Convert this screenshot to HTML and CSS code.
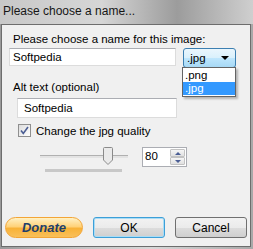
FILE: index.html
```html
<!DOCTYPE html>
<html lang="en">
<head>
    <meta charset="UTF-8">
    <title>Please choose a name...</title>
    <link rel="stylesheet" href="styles.css">
</head>
<body>

<div class="titlebar">Please choose a name...</div>

<div class="panel">
    <label class="label first">Please choose a name for this image:</label>
    <div class="name-row">
        <div class="textbox name">Softpedia</div>
        <div class="combo">
            <div class="combo-box">
                <span>.jpg</span>
                <span class="arrow"></span>
            </div>
            <ul class="combo-list">
                <li>.png</li>
                <li class="selected">.jpg</li>
            </ul>
        </div>
    </div>

    <label class="label alt">Alt text (optional)</label>
    <div class="textbox alt-box">Softpedia</div>

    <div class="check-row">
        <span class="checkbox">
            <svg width="9" height="9" viewBox="0 0 9 9"><path d="M1 4.5 L3.3 7.5 L8 1" fill="none" stroke="#4b5e94" stroke-width="1.6"/></svg>
        </span>
        <span>Change the jpg quality</span>
    </div>

    <div class="quality-row">
        <div class="slider">
            <div class="track"></div>
            <div class="thumb">
                <svg width="10" height="18" viewBox="0 0 10 18"><path d="M0.5 1.5 Q0.5 0.5 1.5 0.5 H8.5 Q9.5 0.5 9.5 1.5 V13 L5 17.5 L0.5 13 Z" fill="#eaeaea" stroke="#8a8a8a"/></svg>
            </div>
            <div class="range-bar"></div>
        </div>
        <div class="spin">
            <span class="spin-value">80</span>
            <div class="spin-buttons">
                <div class="spin-btn"><span class="up"></span></div>
                <div class="spin-btn"><span class="down"></span></div>
            </div>
        </div>
    </div>

    <div class="buttons">
        <button class="donate">Donate</button>
        <button class="btn ok">OK</button>
        <button class="btn">Cancel</button>
    </div>
</div>

</body>
</html>
```

FILE: styles.css
```css
body {
    margin: 0;
    width: 253px;
    height: 249px;
    overflow: hidden;
    font-family: "Liberation Sans", Arial, sans-serif;
    font-size: 11px;
    color: #000;
    background: linear-gradient(90deg, #9a9a9a 0%, #c4c4c4 30%, #d8d8d8 60%, #a8a8a8 100%);
}
.titlebar {
    height: 24px;
    box-sizing: border-box;
    padding: 4px 0 0 3px;
    font-size: 12px;
    color: #161616;
    background: linear-gradient(90deg, #c8c8c8 0%, #d6d6d6 40%, #9c9c9c 70%, #cfcfcf 100%);
}
.panel {
    margin-left: 1px;
    width: 250px;
    height: 223px;
    box-sizing: border-box;
    border: 1px solid #6d6d6d;
    background: #f0f0f0;
    display: flex;
    flex-direction: column;
}
.label {
    display: block;
    font-size: 11.5px;
    color: #000;
}
.label.first {
    margin: 8px 0 0 11px;
}
.name-row {
    display: flex;
    margin: 3px 0 0 7px;
    position: relative;
}
.textbox {
    box-sizing: border-box;
    height: 18px;
    border: 1px solid #dcdcdc;
    border-top-color: #abadb3;
    background: #fff;
    padding: 2px 0 0 3px;
    font-size: 11.5px;
}
.textbox.name {
    width: 167px;
}
.combo {
    margin-left: 7px;
    position: relative;
}
.combo-box {
    box-sizing: border-box;
    width: 53px;
    height: 20px;
    border: 1px solid #3c7fb1;
    border-radius: 3px;
    background: linear-gradient(#eaf6fd, #d9f0fc 50%, #bee6fd 51%, #a7d9f5);
    display: flex;
    align-items: center;
    justify-content: space-between;
    padding: 0 6px 0 3px;
    font-size: 11.5px;
}
.arrow {
    width: 0;
    height: 0;
    border-left: 4px solid transparent;
    border-right: 4px solid transparent;
    border-top: 4px solid #000;
}
.combo-list {
    position: absolute;
    top: 19px;
    left: -1px;
    width: 54px;
    margin: 0;
    padding: 1px 0;
    list-style: none;
    box-sizing: border-box;
    border: 1px solid #646464;
    background: #fff;
    box-shadow: 2px 2px 2px rgba(0, 0, 0, 0.25);
    font-size: 11.5px;
    z-index: 2;
}
.combo-list li {
    height: 13px;
    line-height: 13px;
    padding-left: 2px;
}
.combo-list li.selected {
    background: #3399ff;
    color: #fff;
}
.label.alt {
    margin: 13px 0 0 11px;
}
.alt-box {
    width: 160px;
    height: 20px;
    margin: 5px 0 0 15px;
    padding: 3px 0 0 6px;
}
.check-row {
    display: flex;
    align-items: center;
    margin: 6px 0 0 16px;
    font-size: 11.5px;
}
.checkbox {
    box-sizing: border-box;
    width: 13px;
    height: 13px;
    border: 1px solid #8f8f8f;
    background: linear-gradient(135deg, #dcdcdc, #fff);
    display: flex;
    align-items: center;
    justify-content: center;
    margin-right: 5px;
}
.quality-row {
    display: flex;
    margin: 10px 0 0 38px;
}
.slider {
    position: relative;
    width: 88px;
    height: 26px;
}
.track {
    position: absolute;
    top: 8px;
    left: 0;
    right: 0;
    height: 2px;
    background: #e3e3e3;
    border-top: 1px solid #b0b0b0;
}
.thumb {
    position: absolute;
    left: 63px;
    top: 0;
    line-height: 0;
}
.range-bar {
    position: absolute;
    top: 22px;
    left: 5px;
    width: 77px;
    height: 3px;
    background: #c8c8c8;
}
.spin {
    box-sizing: border-box;
    width: 45px;
    height: 20px;
    margin-left: 14px;
    border: 1px solid #abadb3;
    background: #fff;
    display: flex;
    justify-content: space-between;
}
.spin-value {
    padding: 2px 0 0 2px;
    font-size: 11.5px;
}
.spin-buttons {
    width: 15px;
    display: flex;
    flex-direction: column;
    padding: 1px;
}
.spin-btn {
    flex: 1;
    border: 1px solid #c2c2c2;
    border-radius: 1px;
    background: linear-gradient(#f6f6f6, #e0e0e0);
    display: flex;
    align-items: center;
    justify-content: center;
}
.up, .down {
    width: 0;
    height: 0;
    border-left: 3px solid transparent;
    border-right: 3px solid transparent;
}
.up {
    border-bottom: 3px solid #4b5e94;
}
.down {
    border-top: 3px solid #4b5e94;
}
.buttons {
    display: flex;
    align-items: center;
    margin: auto 0 8px 3px;
}
.donate {
    box-sizing: border-box;
    width: 78px;
    height: 21px;
    border: 1px solid #f3a536;
    border-radius: 11px;
    background: linear-gradient(#fff1c4 0%, #ffd27a 45%, #f8b238 55%, #f9c05a 100%);
    font-family: "Liberation Sans", Arial, sans-serif;
    font-weight: bold;
    font-style: italic;
    font-size: 13px;
    color: #1f3f6b;
    padding: 0;
}
.btn {
    box-sizing: border-box;
    width: 72px;
    height: 21px;
    margin-left: 10px;
    border: 1px solid #707070;
    border-radius: 3px;
    background: linear-gradient(#f2f2f2 0%, #ebebeb 50%, #dddddd 51%, #cfcfcf 100%);
    font-family: "Liberation Sans", Arial, sans-serif;
    font-size: 12px;
    color: #000;
    padding: 0;
}
.btn.ok {
    border-color: #3c9fd8;
    box-shadow: inset 0 0 0 1px #a9dcf5;
}
```
